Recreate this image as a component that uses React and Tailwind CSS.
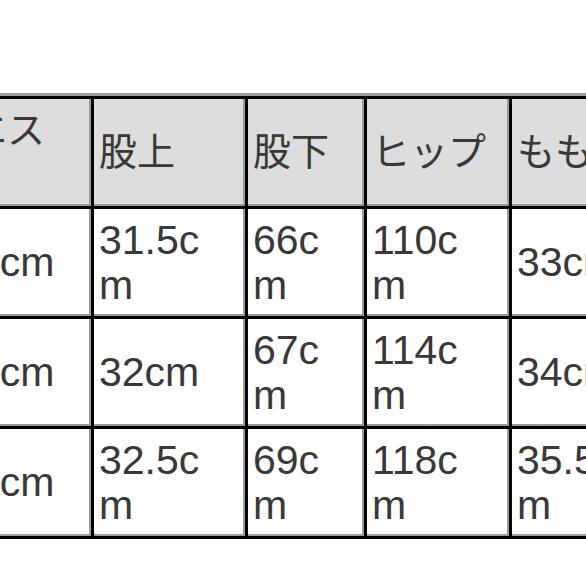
const headers = ["ウエスト", "股上", "股下", "ヒップ", "もも幅"];

const rows = [
  ["68.5cm", "31.5cm", "66cm", "110cm", "33cm"],
  ["70.5cm", "32cm", "67cm", "114cm", "34cm"],
  ["72.5cm", "32.5cm", "69cm", "118cm", "35.5cm"],
];

// right padding per column decides where the text wraps
const pads = ["pr-[25px]", "pr-[20px]", "pr-[21px]", "pr-[21px]", "pr-[27px]"];

function Cell({ children, head, col }) {
  const left = head && col === 0 ? "pl-[16px]" : "pl-[5px]";
  return (
    <div
      className={`flex items-center ${left} ${pads[col]} break-all leading-[45px] text-[#383838] shadow-[inset_-2px_-2px_0_#9b9b9b] ${
        head ? "bg-[#dddddd] text-[38px]" : "bg-white text-[41px]"
      }`}
    >
      <span className="block w-full">{children}</span>
    </div>
  );
}

export default function App() {
  return (
    <div
      className="w-[586px] h-[586px] overflow-hidden bg-white pt-[93px]"
      style={{ fontFamily: '"Liberation Sans", "Noto Sans CJK JP", sans-serif' }}
    >
      <div className="ml-[-88px] w-max border-t-[3px] border-[#9b9b9b]">
        <div className="grid grid-cols-[176px_151px_116px_142px_160px] grid-rows-[107px_107px_107px_107px] gap-[3px] p-[3px] bg-black">
          {headers.map((h, i) => (
            <Cell key={h} head col={i}>
              {h}
            </Cell>
          ))}
          {rows.map((r, ri) =>
            r.map((v, i) => (
              <Cell key={ri + "-" + i} col={i}>
                {v}
              </Cell>
            ))
          )}
        </div>
      </div>
    </div>
  );
}
